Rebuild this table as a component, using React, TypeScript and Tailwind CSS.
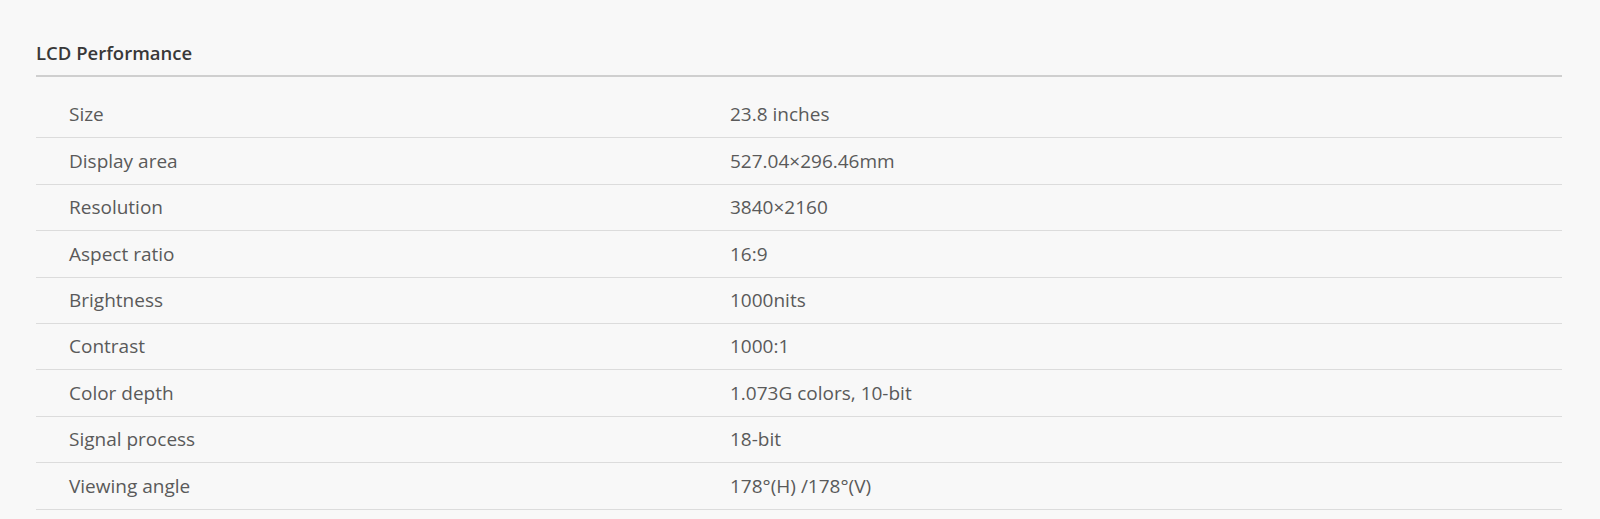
const specs: [string, string][] = [
  ['Size', '23.8 inches'],
  ['Display area', '527.04×296.46mm'],
  ['Resolution', '3840×2160'],
  ['Aspect ratio', '16:9'],
  ['Brightness', '1000nits'],
  ['Contrast', '1000:1'],
  ['Color depth', '1.073G colors, 10-bit'],
  ['Signal process', '18-bit'],
  ['Viewing angle', '178°(H) /178°(V)'],
];

export default function App() {
  return (
    <div className="min-h-[519px] bg-[#f8f8f8] font-['Open_Sans',sans-serif]">
      <div className="ml-[36px] w-[1526px] pt-[41px]">
        <h2 className="border-b-2 border-[#cfcfcf] pb-[10px] text-[18.5px] leading-[24px] font-semibold text-[#383838]">
          LCD Performance
        </h2>
        <div className="mt-[15px]">
          {specs.map(([label, value]) => (
            <div
              key={label}
              className="flex h-[46.4px] items-center border-b border-[#dcdcdc] text-[19px] text-[#5a5a5a]"
            >
              <div className="w-[694px] pl-[33px]">{label}</div>
              <div>{value}</div>
            </div>
          ))}
        </div>
      </div>
    </div>
  );
}
